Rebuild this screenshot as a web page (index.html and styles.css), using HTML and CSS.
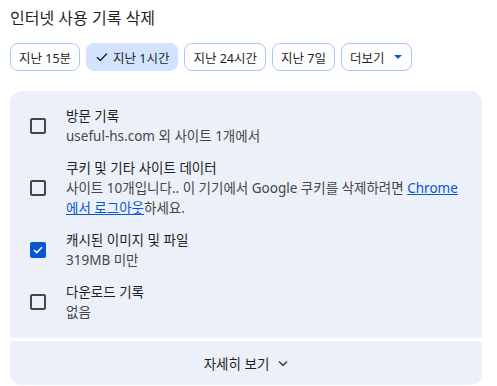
FILE: index.html
```html
<!DOCTYPE html>
<html lang="ko">
<head>
    <meta charset="UTF-8">
    <title>인터넷 사용 기록 삭제</title>
    <link rel="stylesheet" href="styles.css">
</head>
<body>
    <h1 class="title">인터넷 사용 기록 삭제</h1>

    <div class="chips">
        <button class="chip">지난 15분</button>
        <button class="chip selected">
            <svg class="check" width="12" height="10" viewBox="0 0 12 10"><path d="M1 5.2 L4.3 8.4 L11 1.6" fill="none" stroke="#1f1f1f" stroke-width="1.4"/></svg>
            지난 1시간
        </button>
        <button class="chip">지난 24시간</button>
        <button class="chip">지난 7일</button>
        <button class="chip">더보기 <span class="caret"></span></button>
    </div>

    <div class="panel">
        <div class="row">
            <span class="box"></span>
            <div class="text">
                <div class="label">방문 기록</div>
                <div class="sub">useful-hs.com 외 사이트 1개에서</div>
            </div>
        </div>
        <div class="row">
            <span class="box"></span>
            <div class="text">
                <div class="label">쿠키 및 기타 사이트 데이터</div>
                <div class="sub">사이트 10개입니다.. 이 기기에서 Google 쿠키를 삭제하려면 <a href="#">Chrome 에서 로그아웃</a>하세요.</div>
            </div>
        </div>
        <div class="row">
            <span class="box checked">
                <svg width="10" height="8" viewBox="0 0 10 8"><path d="M1 4 L3.7 6.6 L9 1.2" fill="none" stroke="#fff" stroke-width="1.6"/></svg>
            </span>
            <div class="text">
                <div class="label">캐시된 이미지 및 파일</div>
                <div class="sub">319MB 미만</div>
            </div>
        </div>
        <div class="row">
            <span class="box"></span>
            <div class="text">
                <div class="label">다운로드 기록</div>
                <div class="sub">없음</div>
            </div>
        </div>
    </div>

    <div class="more">
        자세히 보기
        <svg width="10" height="7" viewBox="0 0 10 7"><path d="M1 1.5 L5 5.3 L9 1.5" fill="none" stroke="#444746" stroke-width="1.6"/></svg>
    </div>
</body>
</html>
```

FILE: styles.css
```css
body {
    margin: 0;
    padding: 0 15px 0 10px;
    font-family: "Noto Sans", "Noto Sans CJK KR", sans-serif;
    font-size: 13.5px;
    color: #1f1f1f;
    background: #fff;
    word-break: keep-all;
}
.title {
    margin: 0;
    padding-top: 6px;
    font-size: 16px;
    font-weight: normal;
    line-height: 24px;
}
.chips {
    display: flex;
    gap: 6px;
    margin-top: 13px;
}
.chip {
    display: flex;
    align-items: center;
    gap: 5px;
    height: 28px;
    padding: 0 8px;
    border: 1px solid #a8c7fa;
    border-radius: 8px;
    background: #fff;
    font-family: inherit;
    font-size: 12.5px;
    color: #1f1f1f;
    white-space: nowrap;
}
.chip.selected {
    background: #d3e3fd;
    border-color: #d3e3fd;
    padding-left: 9px;
}
.caret {
    width: 0;
    height: 0;
    margin-left: 5px;
    margin-right: 1px;
    border-left: 4px solid transparent;
    border-right: 4px solid transparent;
    border-top: 4px solid #0b57d0;
}
.panel {
    display: flex;
    flex-direction: column;
    gap: 12px;
    margin-top: 20px;
    padding: 15px 20px 16px 20px;
    background: #ecf0f9;
    border-radius: 12px 12px 4px 4px;
}
.row {
    display: flex;
    align-items: center;
}
.box {
    flex: none;
    width: 12px;
    height: 12px;
    border: 2px solid #444746;
    border-radius: 2px;
    margin-right: 20px;
}
.box.checked {
    display: flex;
    align-items: center;
    justify-content: center;
    background: #0b57d0;
    border-color: #0b57d0;
}
.text {
    line-height: 20px;
}
.sub {
    color: #474747;
}
.sub a {
    color: #0b57d0;
}
.more {
    display: flex;
    align-items: center;
    justify-content: center;
    gap: 9px;
    height: 44px;
    margin-top: 3px;
    background: #ecf0f9;
    border-radius: 4px 4px 12px 12px;
    color: #1f1f1f;
}
```
